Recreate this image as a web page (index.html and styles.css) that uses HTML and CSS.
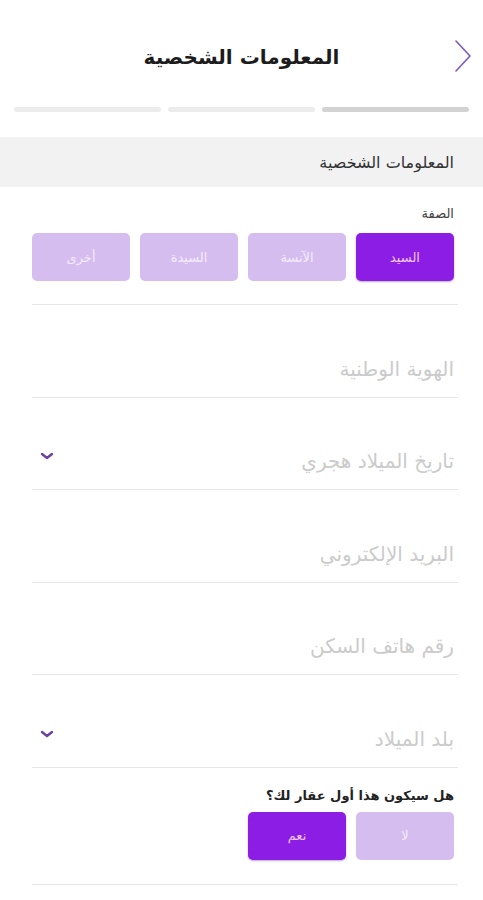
FILE: index.html
```html
<!DOCTYPE html>
<html lang="ar" dir="rtl">
<head>
    <meta charset="UTF-8">
    <meta name="viewport" content="width=device-width, initial-scale=1.0">
    <title>المعلومات الشخصية</title>
    <link rel="stylesheet" href="styles.css">
</head>
<body>

    <div class="header">
        <button class="back-btn" aria-label="رجوع">
            <svg width="18" height="34" viewBox="0 0 18 34">
                <path d="M2 2 L16 17 L2 32" fill="none" stroke="#7b58c4" stroke-width="1.6" stroke-linecap="round" stroke-linejoin="round"/>
            </svg>
        </button>
        <h1>المعلومات الشخصية</h1>
    </div>

    <div class="progress">
        <span class="step done"></span>
        <span class="step"></span>
        <span class="step"></span>
    </div>

    <div class="section-title">المعلومات الشخصية</div>

    <form class="form">
        <div class="choice-group">
            <label class="small-label">الصفة</label>
            <div class="choices">
                <button type="button" class="choice active">السيد</button>
                <button type="button" class="choice">الآنسة</button>
                <button type="button" class="choice">السيدة</button>
                <button type="button" class="choice">أخرى</button>
            </div>
        </div>

        <div class="field">
            <input type="text" dir="rtl" placeholder="الهوية الوطنية">
        </div>

        <div class="field select">
            <input type="text" dir="rtl" placeholder="تاريخ الميلاد هجري">
            <svg class="caret" width="14" height="8" viewBox="0 0 14 8">
                <path d="M2 2 L7 6 L12 2" fill="none" stroke="#6a3fa6" stroke-width="2.4" stroke-linecap="round" stroke-linejoin="round"/>
            </svg>
        </div>

        <div class="field">
            <input type="email" dir="rtl" placeholder="البريد الإلكتروني">
        </div>

        <div class="field">
            <input type="tel" dir="rtl" placeholder="رقم هاتف السكن">
        </div>

        <div class="field select">
            <input type="text" dir="rtl" placeholder="بلد الميلاد">
            <svg class="caret" width="14" height="8" viewBox="0 0 14 8">
                <path d="M2 2 L7 6 L12 2" fill="none" stroke="#6a3fa6" stroke-width="2.4" stroke-linecap="round" stroke-linejoin="round"/>
            </svg>
        </div>

        <div class="choice-group question">
            <label class="question-label">هل سيكون هذا أول عقار  لك؟</label>
            <div class="choices">
                <button type="button" class="choice">لا</button>
                <button type="button" class="choice active">نعم</button>
            </div>
        </div>
    </form>

</body>
</html>
```

FILE: styles.css
```css
body {
    font-family: "DejaVu Sans", "Noto Sans", sans-serif;
    background-color: #fff;
    color: #222;
    margin: 0;
    padding: 0;
}

.header {
    position: relative;
    height: 90px;
    display: flex;
    align-items: center;
    justify-content: center;
    padding-top: 24px;
    box-sizing: border-box;
}

    .header h1 {
        margin: 0;
        font-size: 20px;
        font-weight: bold;
        color: #1c1c1c;
    }

.back-btn {
    position: absolute;
    right: 11px;
    top: 39px;
    background: none;
    border: none;
    padding: 0;
    cursor: pointer;
}

.progress {
    display: flex;
    gap: 7px;
    padding: 17px 14px 0 14px;
}

    .progress .step {
        flex: 1;
        height: 5px;
        border-radius: 3px;
        background-color: #ececec;
    }

        .progress .step.done {
            background-color: #d2d2d2;
        }

.section-title {
    margin-top: 25px;
    height: 50px;
    background-color: #f2f2f3;
    display: flex;
    align-items: center;
    padding-right: 29px;
    font-size: 16px;
    color: #333;
}

.form {
    padding: 0 25px 0 32px;
}

.choice-group {
    padding-top: 18px;
    padding-bottom: 23px;
    border-bottom: 1px solid #e6e6e6;
}

.small-label {
    display: block;
    padding-right: 4px;
    font-size: 13px;
    line-height: 17px;
    color: #444;
}

.choices {
    display: flex;
    gap: 10px;
    margin-top: 11px;
    padding-right: 4px;
}

.choice {
    width: 98px;
    height: 48px;
    border: none;
    border-radius: 5px;
    background-color: #d6bdf0;
    color: #f3ecfb;
    font-family: inherit;
    font-size: 13px;
    cursor: pointer;
}

    .choice.active {
        background-color: #8c1de4;
        color: #efc9f2;
        box-shadow: 0 1px 2px rgba(60, 0, 110, 0.35);
    }

.field {
    position: relative;
    height: 92.5px;
    display: flex;
    align-items: flex-end;
    padding-bottom: 14px;
    box-sizing: border-box;
    border-bottom: 1px solid #e6e6e6;
}

    .field input {
        width: 100%;
        border: none;
        outline: none;
        padding: 0 4px 0 0;
        background: transparent;
        font-family: inherit;
        font-size: 20px;
        line-height: 28px;
        text-align: right;
        color: #333;
    }

        .field input::placeholder {
            color: #cbcbcb;
        }

    .field .caret {
        position: absolute;
        left: 8px;
        bottom: 29px;
    }

.question {
    padding-top: 20px;
    padding-bottom: 24px;
}

.question-label {
    display: block;
    padding-right: 4px;
    font-size: 13px;
    font-weight: bold;
    line-height: 16px;
    color: #222;
}

.question .choices {
    margin-top: 8px;
}
```
